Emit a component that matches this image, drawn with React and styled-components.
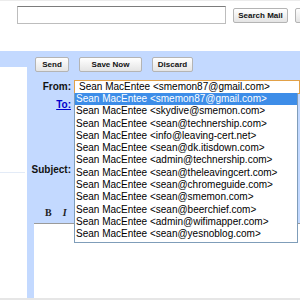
import styled, { createGlobalStyle } from "styled-components";

const GlobalStyle = createGlobalStyle`
  html, body {
    margin: 0;
    padding: 0;
    width: 300px;
    height: 300px;
    overflow: hidden;
    background: #fff;
    font-family: "Liberation Sans", Arial, sans-serif;
  }
`;

const Page = styled.div`
  width: 300px;
  height: 300px;
  display: flex;
  flex-direction: column;
  box-sizing: border-box;
  border-top: 1px solid #ececec;
  border-bottom: 2px solid #e6e6e6;
  overflow: hidden;
`;

const Header = styled.div`
  height: 50px;
  flex: none;
  display: flex;
  align-items: flex-start;
  gap: 7px;
  padding: 5px 0 0 17px;
  box-sizing: border-box;
  white-space: nowrap;
`;

const SearchBox = styled.div`
  flex: none;
  width: 209px;
  height: 18px;
  box-sizing: border-box;
  border: 1px solid #bdbdbd;
  border-top-color: #7c7c7c;
  background: #fff;
`;

const Button = styled.div`
  flex: none;
  height: 15px;
  box-sizing: border-box;
  padding: 0 ${(p) => p.$pad || 7}px;
  margin-top: ${(p) => p.$top || 0}px;
  display: flex;
  align-items: center;
  justify-content: center;
  border: 1px solid #b4b4b4;
  border-radius: 2px;
  background: linear-gradient(#ffffff, #e4e4e4);
  font-size: 8px;
  font-weight: bold;
  color: #111;
  width: ${(p) => p.$w}px;
`;

const Main = styled.div`
  flex: 1;
  display: flex;
  background: #c3d9ff;
  min-height: 0;
`;

const Nav = styled.div`
  width: 27px;
  flex: none;
  margin-top: 16px;
  background: #fff;
  padding-top: 105px;
  box-sizing: border-box;
`;

const NavLine = styled.div`
  width: 25px;
  height: 1px;
  background: #e3ebf7;
`;

const Compose = styled.div`
  flex: 1;
  position: relative;
  display: flex;
  flex-direction: column;
`;

const ButtonRow = styled.div`
  display: flex;
  gap: 10px;
  padding: 6px 0 0 8px;
`;

const Form = styled.div`
  display: grid;
  grid-template-columns: 44px 1fr;
  grid-template-rows: 14px 69px 14px;
  column-gap: 3px;
  margin-top: 8px;
`;

const Label = styled.div`
  text-align: right;
  font-size: 10px;
  font-weight: bold;
  line-height: 14px;
  color: #111;
  padding-top: ${(p) => p.$top || 0}px;
`;

const ToLink = styled.a`
  color: #0000cc;
  text-decoration: underline;
`;

const Select = styled.div`
  height: 14px;
  box-sizing: border-box;
  border: 1px solid #e2a148;
  background: #fff;
  font-size: 10px;
  line-height: 12px;
  padding-left: 4px;
  color: #000;
  white-space: nowrap;
  overflow: hidden;
`;

const Toolbar = styled.div`
  display: flex;
  align-items: center;
  gap: 11px;
  height: 14px;
  margin: 28px 0 4px;
  padding-left: 18px;
  font-family: "Liberation Serif", "Times New Roman", serif;
  font-size: 10px;
  font-weight: bold;
  color: #222;
`;

const Italic = styled.span`
  font-style: italic;
`;

const Editor = styled.div`
  flex: 1;
  margin-left: 7px;
  background: #fff;
  border-top: 1px solid #9a9a9a;
`;

const Dropdown = styled.div`
  position: absolute;
  left: 47px;
  top: 42px;
  width: 224px;
  box-sizing: border-box;
  border: 1px solid #7f9db9;
  border-top: none;
  background: #fff;
  padding-bottom: 1px;
`;

const Option = styled.div`
  font-size: 10px;
  line-height: 12.3px;
  padding-left: 1px;
  white-space: nowrap;
  color: ${(p) => (p.$active ? "#fff" : "#000")};
  background: ${(p) => (p.$active ? "#3d8de8" : "transparent")};
`;

const addresses = [
  "smemon87@gmail.com",
  "skydive@smemon.com",
  "sean@technership.com",
  "info@leaving-cert.net",
  "sean@dk.itisdown.com",
  "admin@technership.com",
  "sean@theleavingcert.com",
  "sean@chromeguide.com",
  "sean@smemon.com",
  "sean@beerchief.com",
  "admin@wifimapper.com",
  "sean@yesnoblog.com",
];

export default function App() {
  return (
    <>
      <GlobalStyle />
      <Page>
        <Header>
          <SearchBox />
          <Button $w={55} $top={2}>Search Mail</Button>
          <Button $w={60} $top={2} />
        </Header>
        <Main>
          <Nav>
            <NavLine />
          </Nav>
          <Compose>
            <ButtonRow>
              <Button $w={34}>Send</Button>
              <Button $w={63}>Save Now</Button>
              <Button $w={41}>Discard</Button>
            </ButtonRow>
            <Form>
              <Label>From:</Label>
              <Select>Sean MacEntee &lt;smemon87@gmail.com&gt;</Select>
              <Label $top={4}>
                <ToLink>To:</ToLink>
              </Label>
              <div />
              <Label>Subject:</Label>
              <div />
            </Form>
            <Toolbar>
              <span>B</span>
              <Italic>I</Italic>
            </Toolbar>
            <Editor />
            <Dropdown>
              {addresses.map((a, i) => (
                <Option key={a} $active={i === 0}>
                  Sean MacEntee &lt;{a}&gt;
                </Option>
              ))}
            </Dropdown>
          </Compose>
        </Main>
      </Page>
    </>
  );
}
